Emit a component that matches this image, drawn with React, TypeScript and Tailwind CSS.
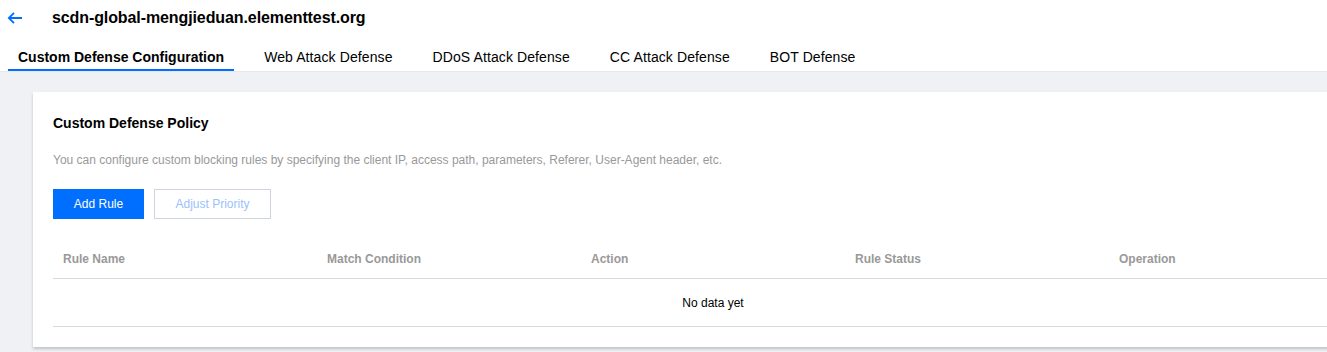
const TABS = [
  "Custom Defense Configuration",
  "Web Attack Defense",
  "DDoS Attack Defense",
  "CC Attack Defense",
  "BOT Defense",
];

const COLUMNS = ["Rule Name", "Match Condition", "Action", "Rule Status", "Operation"];

export default function App() {
  return (
    <div
      className="w-[1327px] h-[352px] overflow-hidden bg-[#f0f1f5] text-[#000]"
      style={{ fontFamily: '"Liberation Sans", Arial, sans-serif' }}
    >
      <header className="h-[72px] bg-white border-b border-[#e6e8ed]">
        <div className="h-[36px] flex items-center">
          <svg width="16" height="16" viewBox="0 0 16 16" className="ml-[7px]" fill="none">
            <path d="M15 8H2M7 2.8L1.8 8 7 13.2" stroke="#006eff" strokeWidth="1.8" />
          </svg>
          <h1 className="ml-[29px] text-[16px] font-bold tracking-[-0.1px]">
            scdn-global-mengjieduan.elementtest.org
          </h1>
        </div>
        <nav className="mt-[7px] flex gap-[20px] pl-[8px]">
          {TABS.map((tab, i) => (
            <div
              key={tab}
              className={
                i === 0
                  ? "h-[28px] pt-[2px] px-[10px] flex items-center border-b-2 border-[#006eff] text-[14px] font-bold"
                  : "h-[28px] pt-[2px] px-[10px] flex items-center border-b-2 border-transparent text-[14px] tracking-[0.1px]"
              }
            >
              {tab}
            </div>
          ))}
        </nav>
      </header>

      <section className="mt-[20px] ml-[33px] w-[1360px] bg-white px-[20px] pt-[20px] pb-[20px] shadow-[0_2px_3px_0_rgba(0,0,0,0.2)]">
        <h2 className="h-[22px] leading-[22px] text-[14px] font-bold">Custom Defense Policy</h2>
        <p className="mt-[17px] leading-[18px] text-[12px] text-[#999]">
          You can configure custom blocking rules by specifying the client IP, access path,
          parameters, Referer, User-Agent header, etc.
        </p>
        <div className="mt-[20px] flex gap-[10px]">
          <button className="h-[30px] w-[91px] bg-[#006eff] text-white text-[12px]">Add Rule</button>
          <button className="h-[30px] w-[117px] border border-[#cfd5de] text-[#9bc1fb] text-[12px]">
            Adjust Priority
          </button>
        </div>
        <div className="mt-[19px] w-[1320px]">
          <div className="grid grid-cols-5 h-[41px] pt-[1px] border-b border-[#d9d9d9]">
            {COLUMNS.map((c) => (
              <div key={c} className="px-[10px] flex items-center text-[12px] font-bold text-[#999]">
                {c}
              </div>
            ))}
          </div>
          <div className="h-[48px] pt-[1px] flex items-center justify-center border-b border-[#d9d9d9] text-[12px] text-[#000]">
            No data yet
          </div>
        </div>
      </section>
    </div>
  );
}
